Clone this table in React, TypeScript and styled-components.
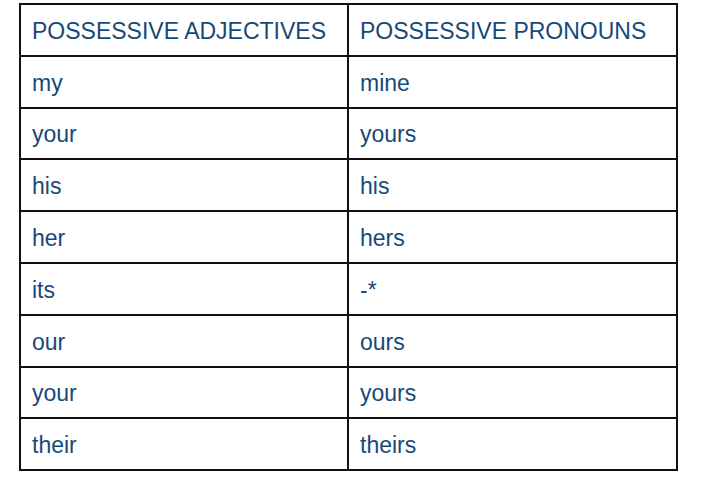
import React from "react";
import styled, { createGlobalStyle } from "styled-components";

const GlobalStyle = createGlobalStyle`
    html, body {
        margin: 0;
        padding: 0;
        background: #ffffff;
    }
`;

type Row = {
    adjective: string;
    pronoun: string;
};

const rows: Row[] = [
    { adjective: "my", pronoun: "mine" },
    { adjective: "your", pronoun: "yours" },
    { adjective: "his", pronoun: "his" },
    { adjective: "her", pronoun: "hers" },
    { adjective: "its", pronoun: "-*" },
    { adjective: "our", pronoun: "ours" },
    { adjective: "your", pronoun: "yours" },
    { adjective: "their", pronoun: "theirs" },
];

export default function App() {
    return (
        <>
            <GlobalStyle />
            <Page>
                <Table role="table">
                    <Cell role="columnheader">POSSESSIVE ADJECTIVES</Cell>
                    <Cell role="columnheader">POSSESSIVE PRONOUNS</Cell>
                    {rows.map((row, i) => (
                        <React.Fragment key={i}>
                            <Cell role="cell">{row.adjective}</Cell>
                            <Cell role="cell">{row.pronoun}</Cell>
                        </React.Fragment>
                    ))}
                </Table>
            </Page>
        </>
    );
}

const Page = styled.div`
    padding: 3px 0 0 19px;
`;

// black background shows through the gaps as the grid lines
const Table = styled.div`
    display: inline-grid;
    grid-template-columns: 326px 327px;
    grid-auto-rows: 49.8px;
    gap: 2px;
    padding: 2px;
    background: #111111;
    font-family: "Liberation Sans", Arial, sans-serif;
`;

const Cell = styled.div`
    display: flex;
    align-items: center;
    padding: 3px 0 0 11px;
    background: #ffffff;
    color: #16497a;
    font-size: 23px;
    white-space: nowrap;
`;
